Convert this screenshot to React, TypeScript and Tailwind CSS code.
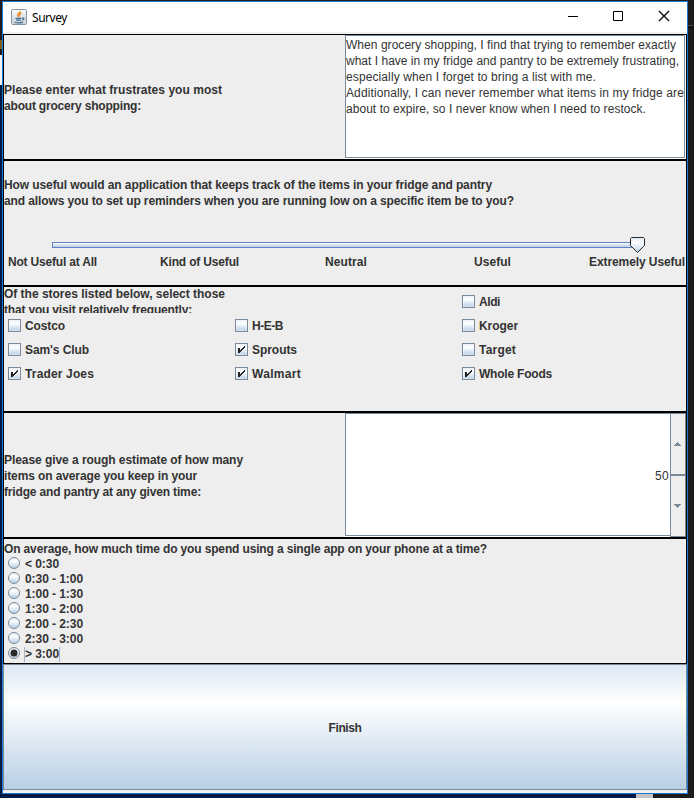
import React, { useLayoutEffect, useRef, useState } from "react";

// One line of label text, tracked out so that it spans the given width.
function Line({ children, w, className = "" }: { children: string; w: number; className?: string }) {
  const ref = useRef<HTMLSpanElement>(null);
  const [spacing, setSpacing] = useState(0);
  useLayoutEffect(() => {
    if (ref.current) {
      setSpacing((w - ref.current.getBoundingClientRect().width) / children.length);
    }
  }, [w, children]);
  return (
    <div className={`whitespace-pre ${className}`}>
      <span ref={ref} style={{ letterSpacing: spacing }}>{children}</span>
    </div>
  );
}

function CheckBox({ label, w, checked = false }: { label: string; w: number; checked?: boolean }) {
  return (
    <div className="flex h-6 items-center gap-1 pl-1">
      <div className="h-[13px] w-[13px] shrink-0 border border-[#7a8a99] bg-linear-to-b from-[#e4edf6] via-white via-30% to-[#b8cfe5] shadow-[inset_0_0_0_1px_rgba(255,255,255,0.35)]">
        {checked && (
          <svg width="11" height="11" viewBox="0 0 11 11" shapeRendering="crispEdges" className="block">
            <path d="M2 4h2v5h-2z M4 7h1v1h-1z M4 6h2v1h-2z M5 5h2v1h-2z M6 4h2v1h-2z M7 3h2v1h-2z M8 2h1v1h-1z" fill="#222" />
          </svg>
        )}
      </div>
      <Line w={w} className="pt-[2px]">{label}</Line>
    </div>
  );
}

function Radio({ label, w, checked = false }: { label: string; w: number; checked?: boolean }) {
  return (
    <div className="flex h-[15px] items-start gap-[4px] pl-1">
      <div className="flex h-3 w-3 shrink-0 items-center justify-center rounded-full border border-[#7a8a99] bg-linear-to-b from-[#e4edf6] via-white via-30% to-[#b8cfe5]">
        {checked && <div className="h-[6px] w-[6px] rounded-full bg-[#2a2a2a] ring-[0.5px] ring-[#2a2a2a]" />}
      </div>
      <div className={`h-[15px] border-x leading-[15px] ${checked ? "border-[#a3b8cc]" : "border-transparent"}`}>
        <Line w={w}>{label}</Line>
      </div>
    </div>
  );
}

function Panel({ children, className = "" }: { children: React.ReactNode; className?: string }) {
  return <section className={`h-[126px] shrink-0 border border-black bg-[#eeeeee] ${className}`}>{children}</section>;
}

function JavaIcon() {
  return (
    <svg width="16" height="16" viewBox="0 0 16 16">
      <defs>
        <linearGradient id="tile" x1="0" y1="0" x2="0" y2="1">
          <stop offset="0" stopColor="#fafafa" />
          <stop offset="1" stopColor="#c9d0d6" />
        </linearGradient>
      </defs>
      <rect x="0.5" y="0.5" width="15" height="15" rx="1" fill="url(#tile)" stroke="#8195a5" />
      <path d="M9 2c.6 1.9-3.5 2.7-2.3 4.5L8 8M10.5 4.2C8.3 5 8 6 9 7.2" stroke="#e8801f" strokeWidth="1.3" fill="none" />
      <path d="M4.5 9.3h6M5 11.2h5M3.5 13.2c2 .8 6 .8 8.5-.1M11 9c2.5-.4 2.5 1.6.2 2.3" stroke="#45708f" strokeWidth="1.2" fill="none" />
    </svg>
  );
}

function Thumb() {
  return (
    <svg width="15" height="16" viewBox="0 0 15 16" className="absolute -top-[5px] right-0">
      <defs>
        <linearGradient id="thumb" x1="0" y1="0" x2="0" y2="1">
          <stop offset="0" stopColor="#dde8f3" />
          <stop offset="0.35" stopColor="#ffffff" />
          <stop offset="1" stopColor="#b8cfe5" />
        </linearGradient>
      </defs>
      <path d="M1.5 .5h12l1 1v7l-7 7-7-7v-7z" fill="url(#thumb)" stroke="#292929" />
    </svg>
  );
}

export default function App() {
  return (
    <div className="flex h-[798px] w-[694px] flex-col overflow-hidden bg-[#1e1c1e] font-['Liberation_Sans',Arial,sans-serif] text-[12px] leading-4 font-bold text-[#333333]">
      <div className="flex h-[794px] shrink-0">
        <div className="flex w-[2px] shrink-0 flex-col">
          <div className="h-[40px] bg-[#1e1c1e]" />
          <div className="h-[9px] bg-[#806020]" />
          <div className="h-[6px] bg-[#1e1c1e]" />
          <div className="h-[30px] bg-[#f0f0ee]" />
          <div className="grow bg-[#021b45]" />
        </div>
        <div className="mt-px flex h-[793px] w-[686px] shrink-0 flex-col border border-[#1c7ad0] bg-[#f0f0f0]">
          <header className="flex h-[30px] shrink-0 items-center bg-white pl-2 text-black">
            <JavaIcon />
            <Line w={35} className="ml-[5px] pt-px font-['Noto_Sans',sans-serif] text-[12px] font-normal">Survey</Line>
            <svg width="120" height="30" viewBox="0 0 120 30" className="ml-auto" fill="none" stroke="black">
              <path d="M1 14.5h10M46.5 9.5h9v9h-9z" />
              <path d="M92 9l10 10M102 9l-10 10" strokeWidth="1.2" />
            </svg>
          </header>
          <div className="h-[2px] shrink-0 bg-[#f0f0ee]" />

          <Panel className="flex">
            <div className="flex w-[341px] flex-col justify-center pt-[2px]">
              <Line w={218}>Please enter what frustrates you most</Line>
              <Line w={137}>about grocery shopping:</Line>
            </div>
            <div className="grow border-r border-b border-white">
              <div className="h-[123px] border border-[#7a8a99] bg-white pt-px font-normal">
                <Line w={330}>When grocery shopping, I find that trying to remember exactly</Line>
                <Line w={333}>what I have in my fridge and pantry to be extremely frustrating,</Line>
                <Line w={250}>especially when I forget to bring a list with me.</Line>
                <Line w={338}>Additionally, I can never remember what items in my fridge are</Line>
                <Line w={300}>about to expire, so I never know when I need to restock.</Line>
              </div>
            </div>
          </Panel>

          <Panel className="pt-4">
            <Line w={488}>How useful would an application that keeps track of the items in your fridge and pantry</Line>
            <Line w={510}>and allows you to set up reminders when you are running low on a specific item be to you?</Line>
            <div className="relative mt-[33px] ml-12 h-[6px] w-[593px]">
              <div className="h-[6px] w-[586px] border border-[#6382bf] bg-linear-to-b from-white via-[#d2e2ef] to-[#b8cfe5]" />
              <Thumb />
            </div>
            <div className="mt-[6px] grid grid-cols-[152px_165px_149px_115px_97px] pl-1">
              <Line w={89}>Not Useful at All</Line>
              <Line w={79}>Kind of Useful</Line>
              <Line w={42}>Neutral</Line>
              <Line w={37}>Useful</Line>
              <Line w={96}>Extremely Useful</Line>
            </div>
          </Panel>

          <Panel>
            <div className="grid grid-cols-[227px_227px_1fr]">
              <div className="h-[26px] overflow-hidden">
                <Line w={221} className="-mt-px">Of the stores listed below, select those</Line>
                <Line w={188}>that you visit relatively frequently:</Line>
              </div>
              <div />
              <div className="pt-[2px]"><CheckBox label="Aldi" w={21} /></div>
              <CheckBox label="Costco" w={40} />
              <CheckBox label="H-E-B" w={31} />
              <CheckBox label="Kroger" w={39} />
              <CheckBox label="Sam's Club" w={64} />
              <CheckBox label="Sprouts" w={45} checked />
              <CheckBox label="Target" w={37} />
              <CheckBox label="Trader Joes" w={69} checked />
              <CheckBox label="Walmart" w={49} checked />
              <CheckBox label="Whole Foods" w={73} checked />
            </div>
          </Panel>

          <Panel className="flex">
            <div className="flex w-[341px] flex-col justify-center pt-[2px]">
              <Line w={239}>Please give a rough estimate of how many</Line>
              <Line w={193}>items on average you keep in your</Line>
              <Line w={197}>fridge and pantry at any given time:</Line>
            </div>
            <div className="flex grow">
              <div className="grow border-b border-white">
                <div className="flex h-[123px] items-center justify-end border-y border-l border-[#7a8a99] bg-white pt-[2px] pr-px font-normal">
                  <Line w={14}>50</Line>
                </div>
              </div>
              <div className="flex w-4 flex-col border border-[#7a8a99]">
                <div className="flex h-[61px] items-center justify-center border-b border-[#7a8a99]">
                  <svg width="8" height="4" viewBox="0 0 8 4" shapeRendering="crispEdges"><path d="M3 0h1v1h1v1h1v1h1v1h-7v-1h1v-1h1v-1h1z" fill="#7a8a99" /></svg>
                </div>
                <div className="flex grow items-center justify-center border-t border-[#7a8a99]">
                  <svg width="8" height="4" viewBox="0 0 8 4" shapeRendering="crispEdges"><path d="M0 0h7v1h-1v1h-1v1h-1v1h-1v-1h-1v-1h-1v-1h-1z" fill="#7a8a99" /></svg>
                </div>
              </div>
            </div>
          </Panel>

          <Panel className="pt-[2px]">
            <Line w={483}>On average, how much time do you spend using a single app on your phone at a time?</Line>
            <Radio label="< 0:30" w={34} />
            <Radio label="0:30 - 1:00" w={58} />
            <Radio label="1:00 - 1:30" w={58} />
            <Radio label="1:30 - 2:00" w={58} />
            <Radio label="2:00 - 2:30" w={58} />
            <Radio label="2:30 - 3:00" w={58} />
            <Radio label="> 3:00" w={34} checked />
          </Panel>

          <button className="flex h-[126px] w-[684px] shrink-0 items-center justify-center border border-[#7a8a99] bg-linear-to-b from-[#dde8f3] via-white via-30% to-[#b8cfe5]">
            <Line w={33} className="pt-[2px]">Finish</Line>
          </button>
        </div>
        <div className="grow pt-[25px]">
          <div className="h-[4px] border-t border-[#454545] bg-[#121212]" />
        </div>
      </div>
      <div className="flex h-1 shrink-0">
        <div className="w-[636px] bg-[#021b45]" />
        <div className="w-[17px] bg-[#c4c4c4]" />
      </div>
    </div>
  );
}
